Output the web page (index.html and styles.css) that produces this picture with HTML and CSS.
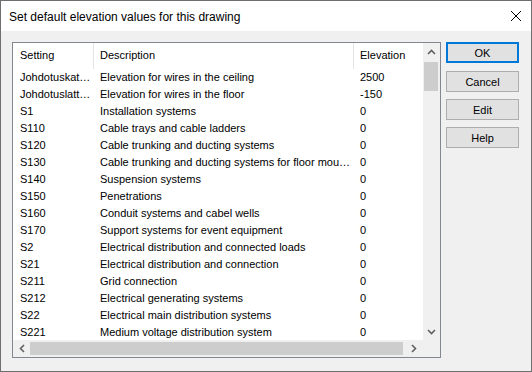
FILE: index.html
```html
<!DOCTYPE html>
<html lang="en">
<head>
  <meta charset="UTF-8" />
  <title>Set default elevation values for this drawing</title>
  <link rel="stylesheet" href="styles.css">
</head>
<body>
  <div class="window">
    <div class="titlebar">
      <span class="title">Set default elevation values for this drawing</span>
      <svg class="close" width="12" height="12" viewBox="0 0 12 12">
        <path d="M1 1 L11 11 M11 1 L1 11" stroke="#000" stroke-width="1" fill="none" />
      </svg>
    </div>

    <div class="content">
      <div class="listbox">
        <div class="list">
          <div class="row head">
            <span class="c1">Setting</span>
            <span class="c2">Description</span>
            <span class="c3">Elevation</span>
          </div>
          <div class="row"><span class="c1">Johdotuskat…</span><span class="c2">Elevation for wires in the ceiling</span><span class="c3">2500</span></div>
          <div class="row"><span class="c1">Johdotuslatt…</span><span class="c2">Elevation for wires in the floor</span><span class="c3">-150</span></div>
          <div class="row"><span class="c1">S1</span><span class="c2">Installation systems</span><span class="c3">0</span></div>
          <div class="row"><span class="c1">S110</span><span class="c2">Cable trays and cable ladders</span><span class="c3">0</span></div>
          <div class="row"><span class="c1">S120</span><span class="c2">Cable trunking and ducting systems</span><span class="c3">0</span></div>
          <div class="row"><span class="c1">S130</span><span class="c2">Cable trunking and ducting systems for floor mou…</span><span class="c3">0</span></div>
          <div class="row"><span class="c1">S140</span><span class="c2">Suspension systems</span><span class="c3">0</span></div>
          <div class="row"><span class="c1">S150</span><span class="c2">Penetrations</span><span class="c3">0</span></div>
          <div class="row"><span class="c1">S160</span><span class="c2">Conduit systems and cabel wells</span><span class="c3">0</span></div>
          <div class="row"><span class="c1">S170</span><span class="c2">Support systems for event equipment</span><span class="c3">0</span></div>
          <div class="row"><span class="c1">S2</span><span class="c2">Electrical distribution and connected loads</span><span class="c3">0</span></div>
          <div class="row"><span class="c1">S21</span><span class="c2">Electrical distribution and connection</span><span class="c3">0</span></div>
          <div class="row"><span class="c1">S211</span><span class="c2">Grid connection</span><span class="c3">0</span></div>
          <div class="row"><span class="c1">S212</span><span class="c2">Electrical generating systems</span><span class="c3">0</span></div>
          <div class="row"><span class="c1">S22</span><span class="c2">Electrical main distribution systems</span><span class="c3">0</span></div>
          <div class="row"><span class="c1">S221</span><span class="c2">Medium voltage distribution system</span><span class="c3">0</span></div>
        </div>

        <div class="vscroll">
          <div class="arrow">
            <svg width="9" height="6" viewBox="0 0 9 6"><path d="M1 5 L4.5 1.5 L8 5" stroke="#606060" stroke-width="1.6" fill="none" /></svg>
          </div>
          <div class="thumb"></div>
          <div class="track"></div>
          <div class="arrow">
            <svg width="9" height="6" viewBox="0 0 9 6"><path d="M1 1 L4.5 4.5 L8 1" stroke="#606060" stroke-width="1.6" fill="none" /></svg>
          </div>
        </div>

        <div class="hscroll">
          <div class="arrow">
            <svg width="6" height="9" viewBox="0 0 6 9"><path d="M5 1 L1.5 4.5 L5 8" stroke="#606060" stroke-width="1.6" fill="none" /></svg>
          </div>
          <div class="thumb"></div>
          <div class="arrow">
            <svg width="6" height="9" viewBox="0 0 6 9"><path d="M1 1 L4.5 4.5 L1 8" stroke="#606060" stroke-width="1.6" fill="none" /></svg>
          </div>
        </div>

        <div class="corner"></div>
      </div>

      <div class="buttons">
        <button class="btn default">OK</button>
        <button class="btn">Cancel</button>
        <button class="btn">Edit</button>
        <button class="btn">Help</button>
      </div>
    </div>
  </div>
</body>
</html>
```

FILE: styles.css
```css
* {
  margin: 0;
  padding: 0;
  box-sizing: border-box;
}

body {
  width: 532px;
  height: 372px;
  overflow: hidden;
  font-family: "Liberation Sans", Arial, sans-serif;
  font-size: 11px;
  color: #000;
  background: #f0f0f0;
}

.window {
  width: 532px;
  height: 372px;
  border: 1px solid #6f6f6f;
  background: #f0f0f0;
  display: flex;
  flex-direction: column;
}

.titlebar {
  height: 30px;
  background: #fff;
  display: flex;
  align-items: center;
  justify-content: space-between;
  padding: 0 9px 0 8px;
}

.title {
  font-size: 12px;
  padding-top: 1px;
}

.close {
  display: block;
}

.content {
  display: flex;
  padding: 11px 12px 0 11px;
  gap: 5px;
}

/* list view */
.listbox {
  width: 429px;
  height: 316px;
  border: 1px solid #828790;
  background: #fff;
  display: grid;
  grid-template-columns: 410px 17px;
  grid-template-rows: 297px 17px;
}

.list {
  overflow: hidden;
}

.row {
  display: flex;
  height: 17px;
  line-height: 17px;
  white-space: nowrap;
}

.row span {
  overflow: hidden;
  padding-left: 6px;
}

.c1 {
  width: 81px;
  flex: none;
}

.c2 {
  width: 260px;
  flex: none;
}

.c3 {
  flex: 1;
}

.row.head {
  height: 26px;
  line-height: 25px;
}

.row.head span {
  border-right: 1px solid #e5e5e5;
}

.row.head .c3 {
  border-right: none;
}

.row .c1 {
  padding-left: 7px;
}

/* scrollbars */
.vscroll,
.hscroll,
.corner {
  background: #f0f0f0;
}

.vscroll {
  display: flex;
  flex-direction: column;
}

.vscroll .arrow {
  height: 17px;
  display: flex;
  align-items: center;
  justify-content: center;
}

.vscroll .thumb {
  height: 29px;
  margin: 2px 2px 0 1px;
  background: #cdcdcd;
}

.vscroll .track {
  flex: 1;
}

.hscroll {
  display: flex;
  align-items: center;
}

.hscroll .arrow {
  width: 17px;
  height: 17px;
  display: flex;
  align-items: center;
  justify-content: center;
}

.hscroll .thumb {
  width: 373px;
  height: 13px;
  margin: 0 2px 0 0;
  background: #cdcdcd;
}

/* buttons */
.buttons {
  display: flex;
  flex-direction: column;
  gap: 7px;
}

.btn {
  width: 73px;
  height: 21px;
  font-family: "Liberation Sans", Arial, sans-serif;
  font-size: 11px;
  color: #000;
  background: #e1e1e1;
  border: 1px solid #adadad;
}

.btn.default {
  border: 2px solid #0078d7;
  margin-bottom: 1px;
}
```
